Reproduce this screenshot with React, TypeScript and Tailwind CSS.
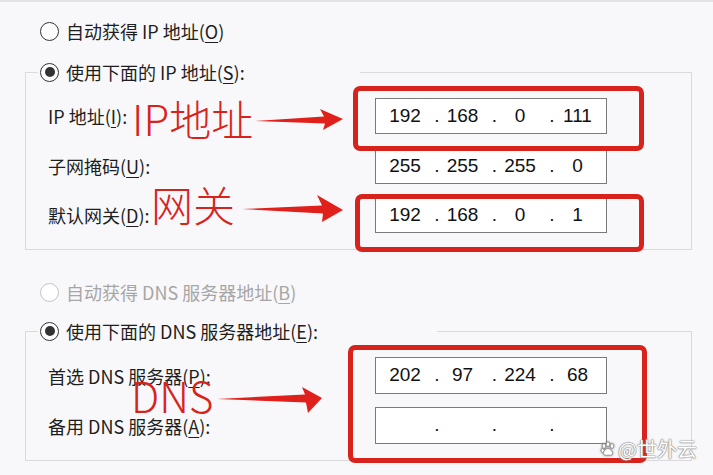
import type { ReactNode } from 'react';

const FONT = '"Noto Sans CJK SC", "Noto Sans", sans-serif';
const MONO = '"Liberation Sans", Arial, sans-serif';

function Radio({ checked, disabled }: { checked?: boolean; disabled?: boolean }) {
  return (
    <span
      className={`flex h-[19px] w-[19px] shrink-0 items-center justify-center rounded-full border bg-white ${
        disabled ? 'border-[#c4c4c4]' : 'border-[#333]'
      }`}
    >
      {checked && <span className="h-[10px] w-[10px] rounded-full bg-[#333]" />}
    </span>
  );
}

function Key({ k }: { k: string }) {
  return (
    <>
      (<span className="underline underline-offset-[3px] decoration-1">{k}</span>)
    </>
  );
}

function Option({ checked, disabled, children }: { checked?: boolean; disabled?: boolean; children: ReactNode }) {
  return (
    <div className={`flex h-[24px] items-center gap-[7px] text-[18px] ${disabled ? 'text-[#a6a6a6]' : 'text-[#1e1e1e]'}`}>
      <Radio checked={checked} disabled={disabled} />
      <span className="leading-none whitespace-nowrap">{children}</span>
    </div>
  );
}

function IpBox({ parts, tall }: { parts: string[]; tall?: boolean }) {
  return (
    <div
      className={`flex w-[232px] items-center border border-[#7a7a7a] bg-white pl-[6px] text-[19px] text-[#111] ${
        tall ? 'h-[37px]' : 'h-[36px]'
      }`}
      style={{ fontFamily: MONO }}
    >
      {parts.map((p, i) => (
        <div key={i} className="flex items-center">
          <span className="w-[46px] text-center">{p}</span>
          {i < 3 && <span className="w-[11.5px] text-right">.</span>}
        </div>
      ))}
    </div>
  );
}

function Row({ label, parts, className, tall }: { label: ReactNode; parts: string[]; className?: string; tall?: boolean }) {
  return (
    <div className={`flex items-center ${className ?? ''}`}>
      <div className="w-[327px] text-[18px] leading-none text-[#1e1e1e] whitespace-nowrap">{label}</div>
      <IpBox parts={parts} tall={tall} />
    </div>
  );
}

function Group({ legend, legendWidth, children, className }: { legend: ReactNode; legendWidth: string; children: ReactNode; className?: string }) {
  return (
    <fieldset className={`ml-[25px] w-[667px] border border-[#dadadc] ${className ?? ''}`}>
      <legend className={`ml-[12px] pl-[2px] ${legendWidth}`}>
        <Option checked>{legend}</Option>
      </legend>
      {children}
    </fieldset>
  );
}

export default function App() {
  return (
    <div
      className="relative h-[475px] w-[713px] overflow-hidden border-t-2 border-[#e2e2e4] bg-[#f8f8fa]"
      style={{ fontFamily: FONT }}
    >
      <div className="flex flex-col pt-[17px]">
        <div className="pl-[40px]">
          <Option>
            自动获得 IP 地址<Key k="O" />
          </Option>
        </div>

        <Group
          className="mt-[17px]"
          legendWidth="w-[322px]"
          legend={
            <>
              使用下面的 IP 地址<Key k="S" />:
            </>
          }
        >
          <div className="flex flex-col pb-[16px] pl-[22px] pt-[14px]">
            <Row label={<>IP 地址<Key k="I" />:</>} parts={['192', '168', '0', '111']} />
            <Row className="mt-[14px]" label={<>子网掩码<Key k="U" />:</>} parts={['255', '255', '255', '0']} />
            <Row className="mt-[13px]" label={<>默认网关<Key k="D" />:</>} parts={['192', '168', '0', '1']} />
          </div>
        </Group>

        <div className="mt-[30px] pl-[40px]">
          <Option disabled>
            自动获得 DNS 服务器地址<Key k="B" />
          </Option>
        </div>

        <Group
          className="mt-[15px]"
          legendWidth="w-[399px]"
          legend={
            <>
              使用下面的 DNS 服务器地址<Key k="E" />:
            </>
          }
        >
          <div className="flex flex-col pb-[16px] pl-[22px] pt-[14px]">
            <Row tall label={<>首选 DNS 服务器<Key k="P" />:</>} parts={['202', '97', '224', '68']} />
            <Row tall className="mt-[13px]" label={<>备用 DNS 服务器<Key k="A" />:</>} parts={['', '', '', '']} />
          </div>
        </Group>
      </div>

      {/* red annotations */}
      <div className="absolute left-[353px] top-[84px] h-[65px] w-[291px] rounded-[7px] border-[5px] border-[#d8231c]" />
      <div className="absolute left-[355px] top-[192px] h-[58px] w-[289px] rounded-[7px] border-[5px] border-[#d8231c]" />
      <div className="absolute left-[348px] top-[343px] h-[118px] w-[299px] rounded-[7px] border-[5px] border-[#d8231c]" />

      <div className="absolute left-[132px] top-[95px] text-[42px] font-light leading-none text-[#d8231c]">IP地址</div>
      <div className="absolute left-[151px] top-[181px] text-[42px] font-light leading-none text-[#d8231c]">网关</div>
      <div className="absolute left-[131px] top-[372px] text-[42px] font-light leading-none text-[#d8231c]">DNS</div>

      <svg className="absolute inset-0" width="713" height="475" viewBox="0 0 713 475">
        <g fill="#e0201b">
          <polygon points="255,119 324,114.5 320,107 343,117 323,128 325,121.5" />
          <polygon points="242,207 322,203.5 317,193 343,208 322,220 323,211.5" />
          <polygon points="217,397 305,392.5 302,385 322,396 308,411 306,400.5" />
        </g>
      </svg>

      {/* watermark */}
      <div
        className="absolute left-[600px] top-[437px] flex items-center gap-[2px] text-[20px] leading-none text-white [text-shadow:0_0_1px_#777,0_0_1px_#777,0_0_2px_#999]"
      >
        <svg width="16" height="16" viewBox="0 0 16 16" className="drop-shadow-[0_0_1px_#777]">
          <g fill="#fff" stroke="#888" strokeWidth="0.8">
            <ellipse cx="4" cy="5" rx="1.8" ry="2.3" />
            <ellipse cx="8" cy="3.2" rx="1.8" ry="2.3" />
            <ellipse cx="12" cy="5" rx="1.8" ry="2.3" />
            <ellipse cx="2.6" cy="9.5" rx="1.5" ry="2" />
            <path d="M8 7.5c2.5 0 5 3.5 4.5 5.5-.4 1.5-2.5 1.2-4.5 1.2s-4.1.3-4.5-1.2C3 11 5.5 7.5 8 7.5z" />
          </g>
        </svg>
        <span>@世外云</span>
      </div>
    </div>
  );
}
